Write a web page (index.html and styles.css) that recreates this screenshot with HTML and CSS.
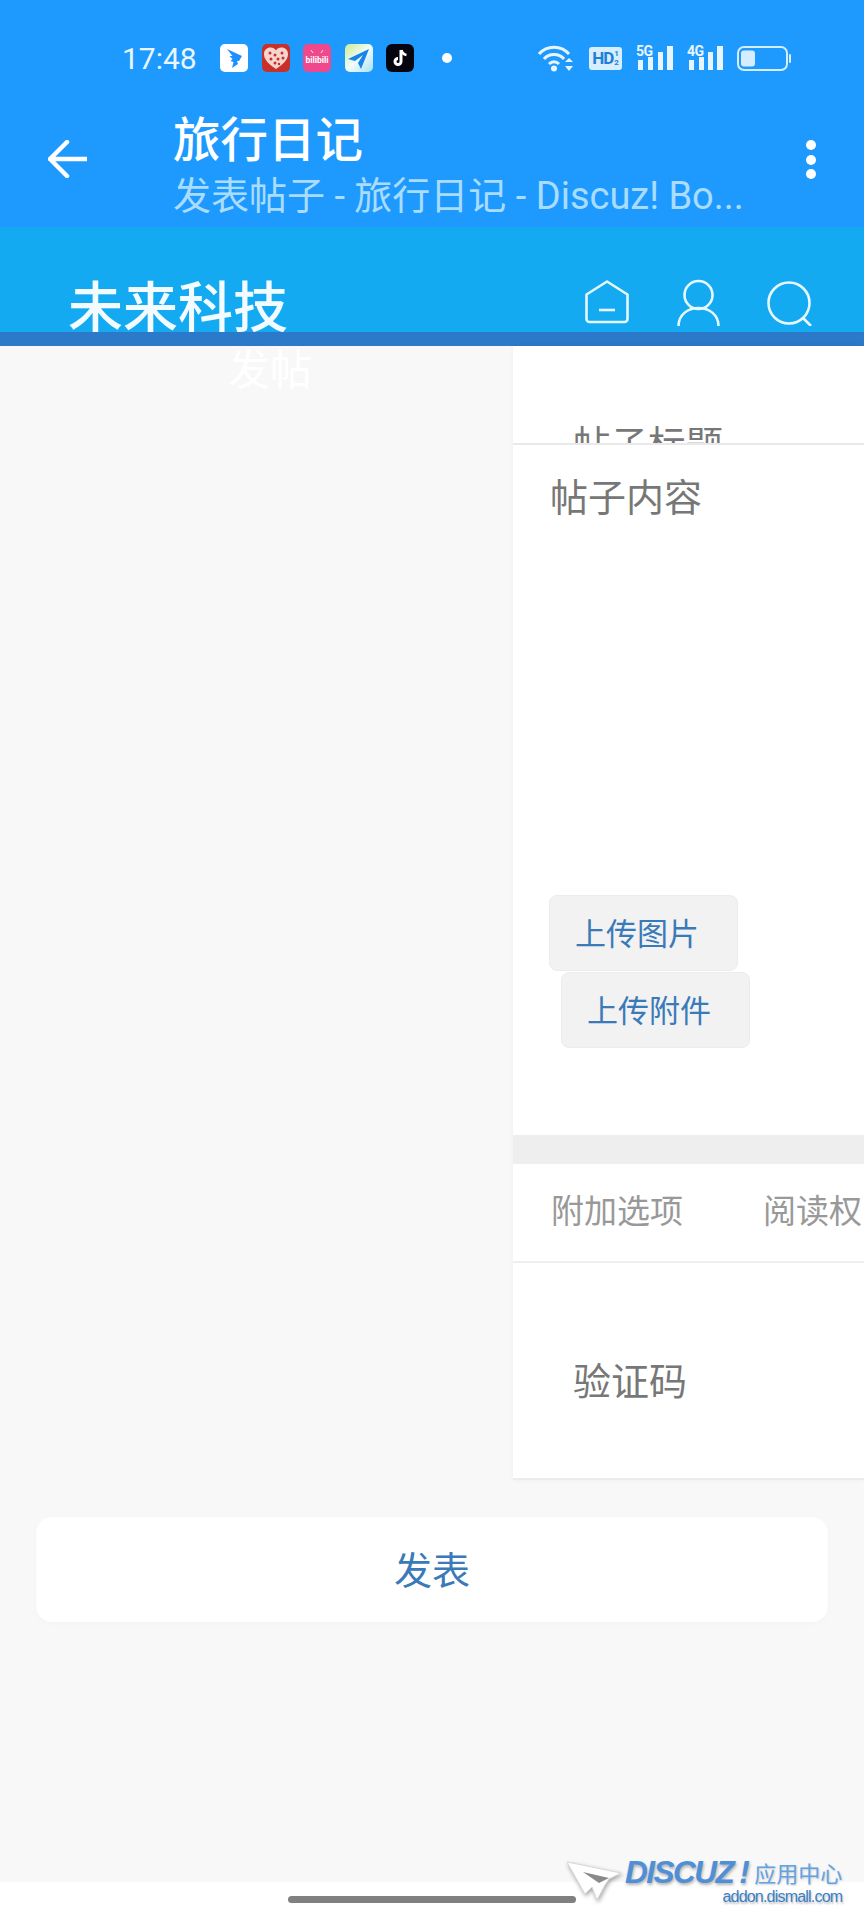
FILE: index.html
```html
<!DOCTYPE html>
<html lang="zh-CN">
<head>
    <meta charset="UTF-8">
    <meta name="viewport" content="width=device-width, initial-scale=1.0">
    <title>发表帖子 - 旅行日记</title>
    <link rel="stylesheet" href="styles.css">
</head>
<body>

<div class="page">
    <!-- phone status bar -->
    <div class="statusbar">
        <span class="time">17:48</span>
        <div class="app-icons">
            <svg class="app-icon" viewBox="0 0 28 28"><rect width="28" height="28" rx="5" fill="#fff"/><path d="M7 5l15 7-3 5-2 0 1 3-6 4 1.500-6-3-1 2-2-3-3 3 0z" fill="#1e8fff"/></svg>
            <svg class="app-icon" viewBox="0 0 28 28"><rect width="28" height="28" rx="5" fill="#c8302a"/><path d="M14 25C7 20 2 16 2 10c0-4 3-6.500 6.500-6.500 2.500 0 4.500 1 5.500 3 1-2 3-3 5.500-3C23 3.500 26 6 26 10c0 6-5 10-12 15z" fill="#f6d5cf"/><g fill="#c8302a"><circle cx="8" cy="9" r="1.500"/><circle cx="13" cy="11" r="1.500"/><circle cx="20" cy="9" r="1.500"/><circle cx="9" cy="15" r="1.500"/><circle cx="16" cy="15" r="1.500"/><circle cx="21" cy="14" r="1.500"/><circle cx="13" cy="19" r="1.500"/><circle cx="17" cy="20" r="1.200"/></g></svg>
            <svg class="app-icon" viewBox="0 0 28 28"><rect width="28" height="28" rx="5" fill="#f0488c"/><path d="M10 9L8 6M18 9l2-3" stroke="#ffd9e8" stroke-width="1"/><text x="14" y="19" text-anchor="middle" class="bili-text">bilibili</text></svg>
            <svg class="app-icon" viewBox="0 0 28 28"><defs><linearGradient id="planeBg" x1="0" y1="0" x2="1" y2="1"><stop offset="0" stop-color="#c9ef8e"/><stop offset="0.5" stop-color="#f2fbfa"/><stop offset="1" stop-color="#a6e2f5"/></linearGradient></defs><rect width="28" height="28" rx="5" fill="url(#planeBg)"/><path d="M24 5L3 15l7 2 8-6-5 8 3 6z" fill="#1784ea"/></svg>
            <svg class="app-icon" viewBox="0 0 28 28"><rect width="28" height="28" rx="6" fill="#050510"/><path d="M15 6v11.500a3 3 0 1 1-3-3" fill="none" stroke="#fff" stroke-width="3"/><path d="M15.500 6c.5 3 2.500 4.500 5 5" fill="none" stroke="#fff" stroke-width="2.600"/></svg>
        </div>
        <span class="status-dot"></span>
        <div class="sys-icons">
            <svg class="wifi" viewBox="0 0 36 28"><g fill="none" stroke="#e8f5ff" stroke-width="3"><path d="M2 10c8-9 22-9 30 0"/><path d="M7 15c5-6 15-6 20 0"/><path d="M12 20c3-3 7-3 10 0"/></g><circle cx="17" cy="24.500" r="3" fill="#e8f5ff"/><path d="M32 14l4 4h-8zM32 27l4-5h-8z" fill="#e8f5ff"/></svg>
            <div class="hd-badge"><span class="hd-main">HD</span><span class="hd-sub">1<br>2</span></div>
            <svg class="signal" viewBox="0 0 38 28"><text x="0" y="12" class="net-text">5G</text><g fill="#e8f5ff"><rect x="2" y="16" width="5" height="10"/><rect x="12" y="13" width="5" height="13"/><rect x="22" y="8" width="5" height="18"/><rect x="31" y="2" width="6" height="24"/></g></svg>
            <svg class="signal" viewBox="0 0 38 28"><text x="0" y="12" class="net-text">4G</text><g fill="#e8f5ff"><rect x="2" y="16" width="5" height="10"/><rect x="12" y="13" width="5" height="13"/><rect x="21" y="8" width="5" height="18"/><rect x="30" y="2" width="6" height="24"/></g></svg>
            <svg class="battery" viewBox="0 0 54 25"><rect x="1" y="1" width="49" height="23" rx="6" fill="none" stroke="#d5edff" stroke-width="2"/><rect x="4" y="4.500" width="14" height="16" rx="3" fill="#d5edff"/><rect x="52" y="8" width="2" height="9" rx="1" fill="#d5edff"/></svg>
        </div>
    </div>

    <!-- webview app bar -->
    <div class="appbar">
        <svg class="back" viewBox="0 0 39 38"><path d="M19 2L2 19l17 17M2 19h37" fill="none" stroke="#fff" stroke-width="4.500" stroke-linecap="round" stroke-linejoin="round"/></svg>
        <div class="appbar-titles">
            <div class="appbar-title">旅行日记</div>
            <div class="appbar-sub">发表帖子 - 旅行日记 - Discuz! Bo...</div>
        </div>
        <div class="kebab"><span></span><span></span><span></span></div>
    </div>

    <!-- site header -->
    <div class="site-header">
        <div class="logo">未来科技</div>
        <div class="nav-icons">
            <svg class="nav-home" viewBox="0 0 44 44"><path d="M22 1.500L42.500 14.500V39a3 3 0 0 1-3 3H4.500a3 3 0 0 1-3-3V14.500z" fill="none" stroke="#e6f7ff" stroke-width="2.600" stroke-linejoin="round"/><path d="M14 30h16" stroke="#e6f7ff" stroke-width="2.600"/></svg>
            <svg class="nav-user" viewBox="0 0 43 48"><g fill="none" stroke="#e6f7ff" stroke-width="2.600"><circle cx="21.500" cy="16" r="14"/><path d="M1.500 47c0-11 9-18 20-18s20 7 20 18"/></g></svg>
            <svg class="nav-search" viewBox="0 0 45 45"><g fill="none" stroke="#e6f7ff" stroke-width="2.600"><circle cx="22" cy="22" r="20.500"/><path d="M36 37l8 8"/></g></svg>
        </div>
    </div>
    <div class="strip"></div>

    <div class="main">
        <div class="form-row">
            <div class="side"><div class="ghost-title">发帖</div></div>
            <div class="panel">
                <div class="title-row"><span>帖子标题</span></div>
                <div class="content-box">
                    <div class="content-label">帖子内容</div>
                    <div class="uploads">
                        <button class="upload-btn">上传图片</button>
                        <button class="upload-btn upload-btn-2">上传附件</button>
                    </div>
                </div>
                <div class="band"></div>
                <div class="tabs">
                    <span class="tab">附加选项</span>
                    <span class="tab">阅读权</span>
                </div>
                <div class="captcha">验证码</div>
            </div>
        </div>
        <div class="submit">发表</div>
    </div>

    <div class="navbar"><div class="pill"></div></div>

    <!-- watermark stamped on the picture -->
    <div class="watermark">
        <svg class="wm-arrow" viewBox="0 0 54 40"><path d="M0 2L54 13 42 19 38 25 30 40 25 27 18 34z" fill="#fff" stroke="#d8d8d8" stroke-width="1"/><path d="M16 12l26 6-10 5z" fill="#8a8a8a"/></svg>
        <div class="wm-text">
            <div class="wm-top"><span class="wm-brand">DISCUZ<span class="wm-bang">!</span></span><span class="wm-cn">应用中心</span></div>
            <div class="wm-url">addon.dismall.com</div>
        </div>
    </div>
</div>

</body>
</html>
```

FILE: styles.css
```css
* {
    margin: 0;
    padding: 0;
    box-sizing: border-box;
}

body {
    width: 864px;
    height: 1920px;
    overflow: hidden;
    background-color: #fff;
    font-family: 'Noto Sans CJK SC', 'Noto Sans', sans-serif;
}

.page {
    position: relative;
    display: flex;
    flex-direction: column;
    width: 864px;
    height: 1920px;
}

/* Status bar */
.statusbar {
    display: flex;
    align-items: center;
    height: 108px;
    padding: 8px 0 0 122px;
    background-color: #1e9aff;
    flex-shrink: 0;
}

.time {
    width: 98px;
    font-family: 'Roboto', sans-serif;
    font-size: 30px;
    color: #eaf6ff;
}

.app-icons {
    display: flex;
    gap: 13.500px;
}

.app-icon {
    width: 28px;
    height: 28px;
}

.bili-text {
    font-family: 'Roboto', sans-serif;
    font-size: 8.500px;
    font-weight: 700;
    fill: #fff;
}

.status-dot {
    width: 10px;
    height: 10px;
    margin-left: 28px;
    border-radius: 50%;
    background-color: #fff;
}

.sys-icons {
    display: flex;
    align-items: center;
    margin-left: 85px;
}

.wifi {
    width: 36px;
    height: 28px;
}

.hd-badge {
    display: flex;
    align-items: center;
    justify-content: center;
    width: 33px;
    height: 23px;
    margin-left: 16px;
    border-radius: 3px;
    background-color: #d7eeff;
    color: #1e7fd6;
    font-family: 'Roboto', sans-serif;
    font-weight: 700;
}

.hd-main {
    font-size: 17px;
    letter-spacing: -1px;
}

.hd-sub {
    font-size: 8px;
    line-height: 9px;
    margin-left: 1px;
    text-align: center;
}

.signal {
    width: 38px;
    height: 28px;
    margin-left: 14px;
}

.signal + .signal {
    margin-left: 13px;
}

.net-text {
    font-family: 'Roboto', sans-serif;
    font-size: 14px;
    font-weight: 700;
    letter-spacing: -0.500px;
    fill: #e8f5ff;
}

.battery {
    width: 54px;
    height: 25px;
    margin-left: 12px;
}

/* App bar */
.appbar {
    display: flex;
    align-items: flex-start;
    height: 119px;
    padding-left: 48px;
    background-color: #1e9aff;
    flex-shrink: 0;
}

.back {
    width: 39px;
    height: 38px;
    margin: 32px 86px 0 0;
}

.appbar-titles {
    width: 600px;
    padding-top: 4px;
}

.appbar-title {
    font-size: 47.500px;
    line-height: 50px;
    font-weight: 500;
    color: #fff;
}

.appbar-sub {
    margin-top: 12px;
    font-family: 'Roboto', 'Noto Sans CJK SC', sans-serif;
    font-size: 38px;
    line-height: 44px;
    color: #a9dcff;
    white-space: nowrap;
}

.kebab {
    display: flex;
    flex-direction: column;
    gap: 4.500px;
    margin: 32px 0 0 33px;
}

.kebab span {
    width: 10px;
    height: 10px;
    border-radius: 50%;
    background-color: #fff;
}

/* Site header */
.site-header {
    display: flex;
    height: 105px;
    padding: 49px 52px 0 68px;
    background-color: #14aaf1;
    flex-shrink: 0;
}

.logo {
    font-size: 55px;
    line-height: 54px;
    font-weight: 500;
    color: #f2fbff;
}

.nav-icons {
    display: flex;
    align-items: flex-start;
    margin: 3px 0 0 auto;
}

.nav-home {
    width: 44px;
    height: 44px;
    margin-top: 1px;
}

.nav-user {
    width: 43px;
    height: 48px;
    margin-left: 48px;
}

.nav-search {
    width: 45px;
    height: 45px;
    margin: 2px 0 0 47px;
}

.strip {
    height: 14px;
    background-color: #2c78c9;
    flex-shrink: 0;
}

/* Main area */
.main {
    flex: 1;
    background-color: #f8f8f8;
}

.form-row {
    display: flex;
    height: 1134px;
}

.side {
    width: 513px;
    padding-left: 228px;
    flex-shrink: 0;
}

.ghost-title {
    font-size: 42px;
    line-height: 42px;
    color: #fff;
}

.panel {
    flex: 1;
    overflow: hidden;
    background-color: #fff;
    box-shadow: 0 0 6px rgba(0, 0, 0, 0.04);
}

.title-row {
    height: 99px;
    padding: 76px 0 0 60px;
    overflow: hidden;
    border-bottom: 2px solid #e9e9e9;
    font-size: 37.500px;
    line-height: 40px;
    color: #777;
}

.content-box {
    height: 690px;
    padding: 31px 0 0 37px;
}

.content-label {
    font-size: 38px;
    line-height: 38px;
    color: #777;
}

.uploads {
    display: flex;
    flex-direction: column;
    align-items: flex-start;
    gap: 1px;
    margin: 381px 0 0 -1px;
}

.upload-btn {
    width: 189px;
    height: 76px;
    padding: 0 0 4px 25px;
    border: 1px solid #ececec;
    border-radius: 8px;
    background-color: #f2f2f2;
    color: #3a7ab8;
    font-family: inherit;
    font-size: 31px;
    text-align: left;
}

.upload-btn-2 {
    margin-left: 12px;
}

.band {
    height: 29px;
    background-color: #eeeeee;
}

.tabs {
    display: flex;
    gap: 80px;
    height: 99px;
    padding: 24px 0 0 38px;
    border-bottom: 2px solid #efefef;
    font-size: 33px;
    line-height: 42px;
    color: #999;
    white-space: nowrap;
}

.captcha {
    height: 217px;
    padding: 93px 0 0 60px;
    border-bottom: 2px solid #ececec;
    font-size: 38px;
    line-height: 46px;
    color: #777;
}

.submit {
    width: 792px;
    height: 105px;
    margin: 37px 0 0 36px;
    border-radius: 16px;
    background-color: #fff;
    box-shadow: 0 2px 6px rgba(0, 0, 0, 0.02);
    font-size: 38px;
    line-height: 101px;
    text-align: center;
    color: #3a7ab8;
}

.navbar {
    height: 38px;
    padding-top: 14px;
    background-color: #fff;
    flex-shrink: 0;
}

.pill {
    width: 288px;
    height: 7px;
    margin: 0 auto;
    border-radius: 4px;
    background-color: #808080;
}

/* Watermark */
.watermark {
    position: absolute;
    left: 567px;
    top: 1860px;
    display: flex;
}

.wm-arrow {
    width: 54px;
    height: 40px;
    filter: drop-shadow(1px 2px 2px rgba(0, 0, 0, 0.35));
}

.wm-text {
    margin-left: 4px;
}

.wm-top {
    display: flex;
    align-items: flex-start;
    height: 26px;
}

.wm-brand {
    margin-top: -6px;
    font-family: 'Liberation Sans', sans-serif;
    font-size: 31.500px;
    font-weight: 700;
    font-style: italic;
    letter-spacing: -1.500px;
    color: #4f8fd8;
    text-shadow: 1px 2px 3px rgba(0, 0, 0, 0.3);
}

.wm-bang {
    margin: 0 6px 0 6px;
}

.wm-cn {
    margin-top: -4px;
    font-size: 22px;
    color: #62a3e4;
    text-shadow: 1px 1px 2px rgba(0, 0, 0, 0.2);
}

.wm-url {
    margin-top: 2px;
    font-family: 'Liberation Sans', sans-serif;
    font-size: 16px;
    line-height: 18px;
    letter-spacing: -0.800px;
    text-align: right;
    color: #3a7fc4;
    text-shadow: 1px 2px 2px rgba(0, 0, 0, 0.25);
}
```
